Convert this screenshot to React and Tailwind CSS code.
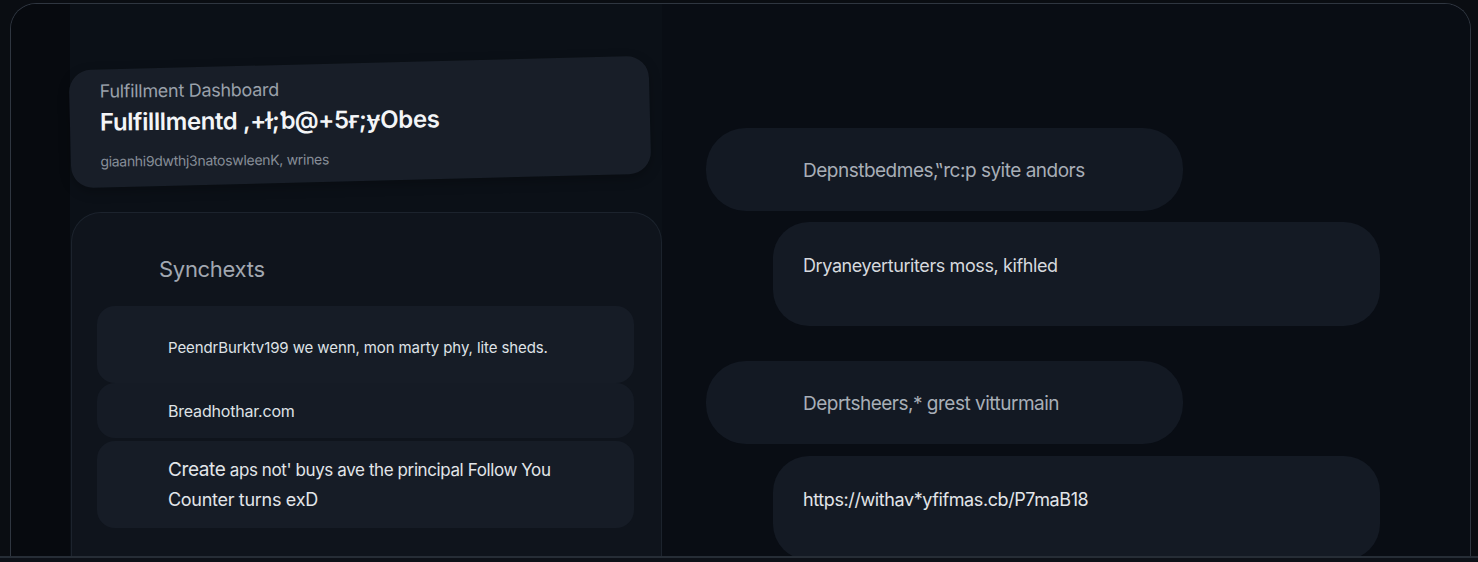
const bubbles = [
    { text: 'Depnstbedmes,‟rc:p syite andors', wide: false, tone: 'text-[#a8aeb7]', mt: 'mt-[124px]' },
    { text: 'Dryaneyerturiters moss, kifhled', wide: true, tone: 'text-[#d6d9de]', mt: 'mt-[11px]' },
    { text: 'Deprtsheers,* grest vitturmain', wide: false, tone: 'text-[#a8aeb7]', mt: 'mt-[35px]' },
    { text: 'https://withav*yfifmas.cb/P7maB18', wide: true, tone: 'text-[#e2e5e9]', mt: 'mt-[12px]' },
];

const Bubble = ({ text, wide, tone, mt }) => {
    if (wide) {
        return (
            <div className={`${mt} ml-[111px] w-[607px] h-[104px] shrink-0 rounded-[36px] bg-[#141a24] pl-[30px] pt-[31px]`}>
                <p className={`text-[18px] leading-[26px] tracking-[-0.4px] ${tone}`}>{text}</p>
            </div>
        );
    }
    return (
        <div className={`${mt} ml-[44px] w-[477px] h-[83px] shrink-0 rounded-[40px] bg-[#131923] pl-[97px] pt-[2px] flex items-center`}>
            <p className={`text-[19px] leading-[26px] tracking-[-0.5px] ${tone}`}>{text}</p>
        </div>
    );
};

export default function App() {
    return (
        <div className="w-[1478px] h-[562px] overflow-hidden bg-[#0a0d12] font-['Inter','Liberation_Sans',sans-serif]">
            {/* Frame */}
            <div className="ml-[10px] mt-[3px] w-[1461px] h-[553px] rounded-t-[26px] border border-b-0 border-[#2f3640] overflow-hidden flex">
                {/* Left column */}
                <div className="w-[651px] h-full shrink-0 bg-[#070a0f] pl-[59px]">
                    <div className="h-full bg-[#0b1017] flex flex-col">
                        {/* Header card */}
                        <div className="mt-[59px] w-[580px] h-[118px] shrink-0 rounded-[22px] bg-[#181e28] -rotate-[1.45deg] pl-[30px] pt-[9px] shadow-[0_4px_12px_rgba(0,0,0,0.25)]">
                            <div className="rotate-[0.9deg] origin-left">
                                <p className="text-[18px] leading-[26px] tracking-[-0.3px] text-[#9aa1ab]">Fulfillment Dashboard</p>
                                <p className="mt-[3px] text-[24px] leading-[30px] font-semibold tracking-[-0.4px] text-[#f3f5f7]">Fulfilllmentd ,+ɫ;ƅ@+5ғ;ɏObes</p>
                                <p className="mt-[14px] text-[14px] leading-[20px] tracking-[-0.3px] text-[#878e98]">giaanhi9dwthj3natoswleenK, wrines</p>
                            </div>
                        </div>

                        {/* Synchexts panel */}
                        <div className="mt-[31px] ml-[1px] flex-1 rounded-t-[30px] border border-b-0 border-[#1c232d] bg-[#0f141c] pl-[25px] pr-[27px]">
                            <p className="pl-[62px] pt-[42px] text-[22px] leading-[28px] tracking-[-0.3px] text-[#a2a8b1]">Synchexts</p>
                            <div className="mt-[23px] flex flex-col">
                                <div className="h-[77px] rounded-[18px] bg-[#161c26] pl-[71px] pt-[6px] flex items-center">
                                    <p className="text-[15px] leading-[22px] tracking-[-0.1px] text-[#dfe2e6]">PeendrBurktv199 we wenn, mon marty phy, lite sheds.</p>
                                </div>
                                <div className="h-[55px] rounded-[18px] bg-[#151b25] pl-[71px] flex items-center">
                                    <p className="text-[16px] leading-[22px] tracking-[-0.2px] text-[#dfe2e6]">Breadhothar.com</p>
                                </div>
                                <div className="mt-[3px] h-[87px] rounded-[18px] bg-[#161c26] pl-[71px] pt-[14px]">
                                    <p className="text-[17px] leading-[29px] tracking-[-0.4px] text-[#e2e5e9]">
                                        <span className="text-[19px]">Create</span> aps not' buys ave the principal Follow You
                                    </p>
                                    <p className="text-[18px] leading-[29px] tracking-[-0.3px] text-[#e2e5e9]">Counter turns exD</p>
                                </div>
                            </div>
                        </div>
                    </div>
                </div>

                {/* Right column */}
                <div className="flex-1 h-full bg-[#090d14] flex flex-col">
                    {bubbles.map((b) => (
                        <Bubble key={b.text} {...b} />
                    ))}
                </div>
            </div>
            {/* Bottom rule */}
            <div className="h-[2px] bg-[#262d36]" />
            <div className="h-[4px] bg-[#0d1118]" />
        </div>
    );
}
